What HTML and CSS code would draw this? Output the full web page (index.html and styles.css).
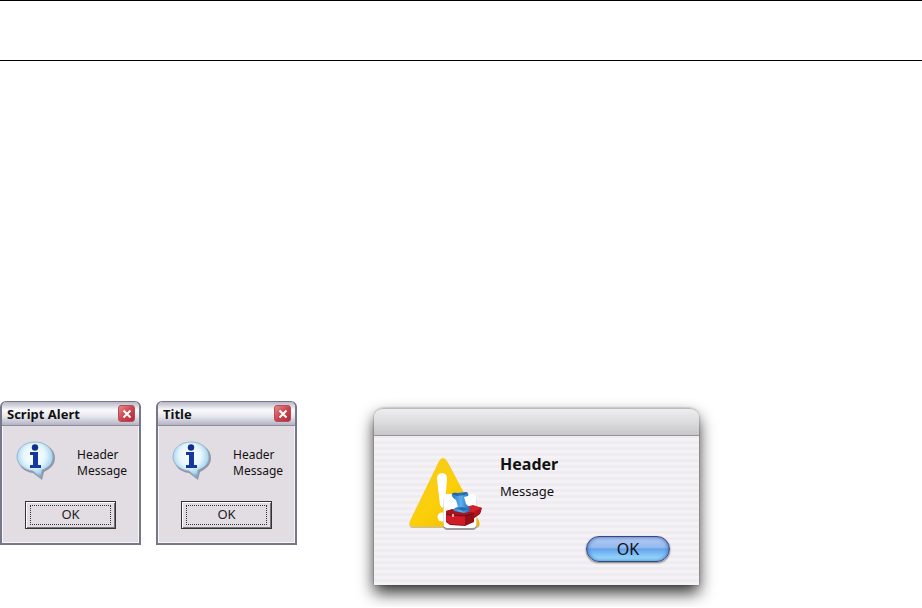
FILE: index.html
```
<!DOCTYPE html>
<html lang="en">
<head>
    <meta charset="UTF-8">
    <meta name="viewport" content="width=device-width, initial-scale=1.0">
    <title>Alert dialogs</title>
    <link rel="stylesheet" href="styles.css">
</head>
<body>
    <header class="page-header"></header>

    <main class="dialogs">
        <section class="win-dialog" role="alertdialog" aria-label="Script Alert">
            <div class="win-titlebar">
                <span class="win-title">Script Alert</span>
                <button type="button" class="win-close" aria-label="Close">
                    <svg width="10" height="10" viewBox="0 0 10 10"><path d="M1.5 1.5l7 7M8.5 1.5l-7 7" stroke="#fff" stroke-width="2"/></svg>
                </button>
            </div>
            <div class="win-content">
                <svg class="win-icon" width="40" height="40" viewBox="0 0 40 40">
                    <defs>
                        <radialGradient id="bubble" cx="48%" cy="38%" r="62%">
                            <stop offset="0" stop-color="#fff"/>
                            <stop offset="0.5" stop-color="#e6f6fd"/>
                            <stop offset="0.8" stop-color="#a8d5ee"/>
                            <stop offset="1" stop-color="#5d9cc6"/>
                        </radialGradient>
                    </defs>
                    <path d="M20 3C30 3 39 9 39 18c0 7-5 11-11 14L26 40 17 33C8 32 2 26 2 18 2 9 10 3 20 3z" fill="#77738a" opacity="0.7"/>
                    <path d="M19 2C29 2 37 8 37 17c0 7-5 11-11 13l-1 8-8-7C8 30 1 24 1 17 1 8 9 2 19 2z" fill="url(#bubble)" stroke="#86afc8" stroke-width="0.8"/>
                    <circle cx="19" cy="7.500" r="3.200" fill="#102f91"/>
                    <path d="M14 12h8v13h3v3H14v-3h3V15h-3z" fill="#1538a0"/>
                </svg>
                <div class="win-text">Header<br>Message</div>
            </div>
            <div class="win-actions"><button type="button" class="win-button"><span>OK</span></button></div>
        </section>

        <section class="win-dialog" role="alertdialog" aria-label="Title">
            <div class="win-titlebar">
                <span class="win-title">Title</span>
                <button type="button" class="win-close" aria-label="Close">
                    <svg width="10" height="10" viewBox="0 0 10 10"><path d="M1.5 1.5l7 7M8.5 1.5l-7 7" stroke="#fff" stroke-width="2"/></svg>
                </button>
            </div>
            <div class="win-content">
                <svg class="win-icon" width="40" height="40" viewBox="0 0 40 40">
                    <path d="M20 3C30 3 39 9 39 18c0 7-5 11-11 14L26 40 17 33C8 32 2 26 2 18 2 9 10 3 20 3z" fill="#77738a" opacity="0.7"/>
                    <path d="M19 2C29 2 37 8 37 17c0 7-5 11-11 13l-1 8-8-7C8 30 1 24 1 17 1 8 9 2 19 2z" fill="url(#bubble)" stroke="#86afc8" stroke-width="0.8"/>
                    <circle cx="19" cy="7.500" r="3.200" fill="#102f91"/>
                    <path d="M14 12h8v13h3v3H14v-3h3V15h-3z" fill="#1538a0"/>
                </svg>
                <div class="win-text">Header<br>Message</div>
            </div>
            <div class="win-actions"><button type="button" class="win-button"><span>OK</span></button></div>
        </section>

        <section class="mac-dialog" role="alertdialog" aria-labelledby="macHeader">
            <div class="mac-titlebar"></div>
            <div class="mac-content">
                <svg class="mac-icon" width="76" height="76" viewBox="0 0 76 76">
                    <defs>
                        <linearGradient id="warning" x1="0" y1="0" x2="1" y2="1">
                            <stop offset="0" stop-color="#f5ca22"/>
                            <stop offset="0.5" stop-color="#fbcf0a"/>
                            <stop offset="1" stop-color="#efb800"/>
                        </linearGradient>
                        <linearGradient id="scroll" x1="0" y1="0" x2="1" y2="0">
                            <stop offset="0" stop-color="#2a78c4"/>
                            <stop offset="0.5" stop-color="#5cb0ee"/>
                            <stop offset="1" stop-color="#1f67b3"/>
                        </linearGradient>
                    </defs>
                    <path d="M30 6q4-7 9 0l31 59q2 6-4 6H5q-6 0-4-6z" fill="#8f8b93" opacity="0.5"/>
                    <path d="M30 4q4-6 8 0l32 60q2 6-4 6H5q-6 0-4-6z" fill="url(#warning)"/>
                    <path d="M28 22q0-6 5-6t5 6l-2 26q-3 5-5 0z" fill="#fff"/>
                    <circle cx="33" cy="60" r="4.500" fill="#fff"/>
                    <rect x="34.500" y="39" width="33" height="34" rx="4" fill="#77737b" opacity="0.7"/>
                    <rect x="34.500" y="37" width="33" height="34" rx="4" fill="#fff"/>
                    <!-- toolbox lid -->
                    <path d="M56 50l8-1 9 2-2 6-7 5-10-5z" fill="#8a121c"/>
                    <path d="M57 50l7-2 9 3-9 5-8-2z" fill="#d4202c"/>
                    <path d="M63 56l9-5v4l-7 6z" fill="#b3121f"/>
                    <!-- toolbox -->
                    <path d="M37 54l6-2 22 4v9l-9 4-15-1-4-3z" fill="#941019"/>
                    <path d="M37 54l6-1 22 3-9 3-19-1z" fill="#a51520"/>
                    <path d="M37 57l19 2v9l-15-1-4-3z" fill="#d01a28"/>
                    <path d="M37 57.500l19 1.500 9-2.500" fill="none" stroke="#65080e" stroke-width="0.8"/>
                    <path d="M44 57v3" stroke="#f2dfe1" stroke-width="1.500"/>
                    <!-- script scroll -->
                    <path d="M43 37q1-2 6-1l9-1q2 2 1 4l-4 1 2 7 4 4-1 4-5 1-10-2q-1-2 1-3l3-1-2-7q-5-3-4-6z" fill="url(#scroll)"/>
                    <path d="M43 37q1-2 6-1l9-1-2 3-8 1-3-1zM46 51l7-1 6 2-5 2z" fill="#17579c" opacity="0.7"/>
                </svg>
                <div class="mac-text">
                    <h1 id="macHeader">Header</h1>
                    <p>Message</p>
                </div>
            </div>
            <div class="mac-actions"><button type="button" class="mac-button">OK</button></div>
        </section>
    </main>
</body>
</html>
```

FILE: styles.css
```
body {
    margin: 0;
    background-color: #fff;
    color: #111;
}
button {
    cursor: pointer;
}
.page-header {
    height: 59px;
    border-top: 1px solid #000;
    border-bottom: 1px solid #000;
    margin-bottom: 340px;
}
.dialogs {
    display: flex;
    align-items: flex-start;
    gap: 15px;
    padding-bottom: 22px;
}

/* Windows alerts */
.win-dialog {
    box-sizing: border-box;
    flex: none;
    width: 141px;
    padding-bottom: 14px;
    border: 2px solid #77778a;
    border-top-width: 1px;
    border-radius: 6px 6px 0 0;
    background-color: #e2dde2;
    box-shadow: inset 1px 0 #f7f5f8, inset -1px -1px #f7f5f8;
    font-family: "Noto Sans", sans-serif;
}
.win-titlebar {
    display: flex;
    align-items: center;
    justify-content: space-between;
    height: 23px;
    padding: 0 4px 0 5px;
    border-bottom: 1px solid #8d8d9d;
    border-radius: 5px 5px 0 0;
    background: linear-gradient(#b6b6c8, #fbfbfd 35%, #e4e4ec 65%, #b3b3c5);
}
.win-title {
    font-size: 13px;
    font-weight: bold;
}
.win-close {
    display: flex;
    align-items: center;
    justify-content: center;
    width: 17px;
    height: 17px;
    padding: 0;
    border: 1px solid #b74b57;
    border-radius: 3px;
    background: linear-gradient(135deg, #e68a88, #cb4750 50%, #b3283a);
}
.win-content {
    display: flex;
    align-items: center;
    gap: 21px;
    padding: 14px 0 0 14px;
}
.win-icon {
    flex: none;
}
.win-text {
    padding-top: 5px;
    font-size: 12px;
    line-height: 16px;
}
.win-actions {
    display: flex;
    justify-content: center;
    padding-top: 21px;
}
.win-button {
    width: 91px;
    height: 28px;
    padding: 2px;
    border: 1px solid #333;
    background-color: #e2dde2;
    box-shadow: inset 1px 1px #fff, inset -1px -1px #77737a;
    color: #222;
    font-family: "Noto Sans", sans-serif;
    font-size: 13px;
}
.win-button span {
    display: block;
    margin: 1px 2px;
    border: 1px dotted #333;
    line-height: 16px;
    padding-bottom: 2px;
}

/* Mac alert */
.mac-dialog {
    box-sizing: border-box;
    flex: none;
    width: 325px;
    margin: 7px 0 0 62px;
    padding-bottom: 23px;
    border-radius: 9px 9px 0 0;
    background: repeating-linear-gradient(#f4f2f5 0, #f4f2f5 3px, #eeecf0 3px, #eeecf0 6px);
    box-shadow: 0 0 2px rgba(0, 0, 0, 0.4), 0 8px 16px rgba(0, 0, 0, 0.8);
    font-family: "Noto Sans", sans-serif;
}
.mac-titlebar {
    height: 26px;
    border-top: 1px solid #bbb;
    border-bottom: 1px solid #969499;
    border-radius: 9px 9px 0 0;
    background: linear-gradient(#eeedef, #dedddf 45%, #c8c7ca);
}
.mac-content {
    display: flex;
    gap: 15px;
    padding: 21px 20px 0 35px;
}
.mac-icon {
    flex: none;
}
.mac-text h1 {
    margin: 0;
    font-size: 16px;
    line-height: 14px;
}
.mac-text p {
    margin: 12px 0 0;
    font-size: 13px;
    line-height: 16px;
}
.mac-actions {
    display: flex;
    justify-content: flex-end;
    padding: 3px 29px 0 0;
}
.mac-button {
    width: 84px;
    height: 26px;
    padding: 0;
    border: 1px solid #34477f;
    border-radius: 13px;
    background: linear-gradient(#b9cef5, #92b8ef 45%, #63a2e9 50%, #83c5fa 75%, #a9edff);
    box-shadow: inset 0 0 4px #2c5ba8, 0 1px 2px rgba(0, 0, 0, 0.5);
    color: #111;
    font-family: "Noto Sans", sans-serif;
    font-size: 16px;
}
```
